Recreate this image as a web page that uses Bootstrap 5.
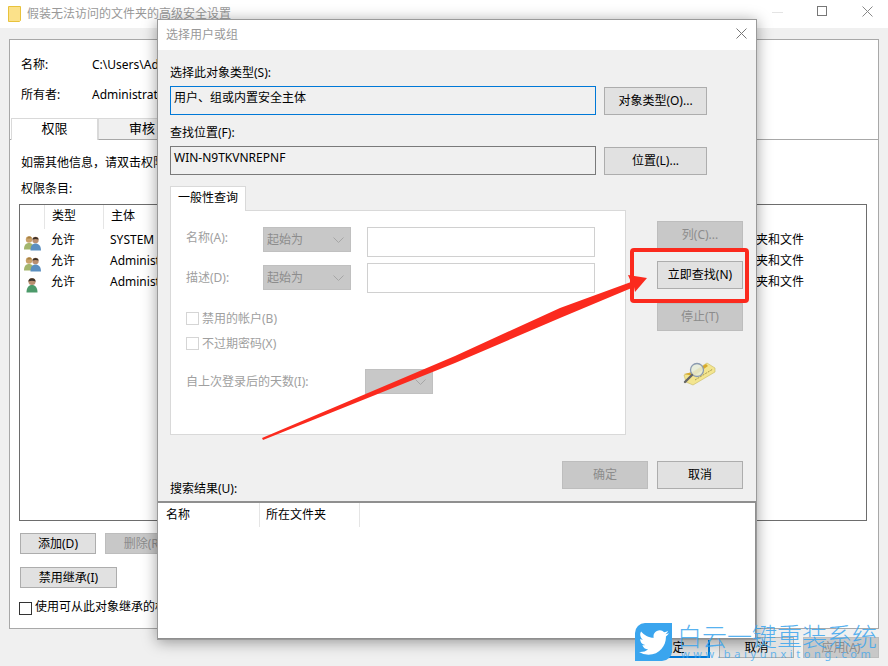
<!DOCTYPE html>
<html lang="zh-CN">
<head>
    <meta charset="UTF-8">
    <meta name="viewport" content="width=device-width, initial-scale=1">
    <title>选择用户或组</title>
    <link href="https://cdn.jsdelivr.net/npm/bootstrap@5.3.0/dist/css/bootstrap.min.css" rel="stylesheet">
    <style>
        html, body { height: 100%; }
        body { width: 888px; height: 666px; overflow: hidden; position: relative; background: #f0f0f0; color: #000;
            font: 12px/16px "Noto Sans", "Noto Sans CJK SC", sans-serif; }

        /* back window */
        .title-bar { height: 28px; background: #fff; color: #999; padding-left: 8px; }
        .folder-ico { margin-right: 6px; }
        .win-ctl { position: absolute; top: 6px; }
        .sec-panel { height: 590px; margin: 11px 9px 0; background: #fff; border: 1px solid #a8a8a8; padding: 0 11px 0 9px; }
        .sec-info { padding: 17px 0 0 2px; height: 78px; }
        .sec-info .info-row { height: 30px; display: flex; }
        .sec-info .info-key { width: 71px; }
        .tab-strip { height: 22px; margin: 0 -11px 0 -9px; border-bottom: 1px solid #a8a8a8; }
        .tab-item { height: 22px; text-align: center; line-height: 19px; font-size: 13px; background: #f0f0f0; border: 1px solid #d9d9d9; border-bottom: 0; }
        .tab-first { width: 87px; background: #fff; margin-left: 1px; }
        .tab-second { width: 88px; border-bottom: 1px solid #a8a8a8; }
        .sec-text { padding: 15px 0 0 2px; height: 64px; }
        .sec-text p { margin: 0 0 10px; white-space: nowrap; }
        .acl-box { height: 317px; border: 1px solid #6d6d6d; }
        .acl-head { height: 24px; }
        .acl-cell { padding-left: 7px; line-height: 22px; white-space: nowrap; }
        .acl-head .acl-cell { border-left: 1px solid #e5e5e5; }
        .acl-row { height: 21px; line-height: 21px; }
        .acl-row .acl-cell { line-height: 21px; }
        .c-ico { width: 24px; padding: 2px 0 0 4px; }
        .c-type { width: 59px; }
        .c-who { width: 120px; }
        .c-access { width: 300px; }
        .c-from { width: 130px; }
        .win-btn { --bs-btn-padding-y: 0; --bs-btn-padding-x: 0; --bs-btn-font-size: 12px; --bs-btn-line-height: 16px; --bs-btn-border-radius: 0;
            --bs-btn-color: #000; --bs-btn-bg: #e1e1e1; --bs-btn-border-color: #adadad;
            --bs-btn-disabled-color: #8c8c8c; --bs-btn-disabled-bg: #c8c8c8; --bs-btn-disabled-border-color: #bdbdbd; --bs-btn-disabled-opacity: 1;
            height: 28px; font-family: inherit; }
        .sec-actions { margin: 12px 0 0 1px; gap: 9px; }
        .sec-actions .win-btn, .sec-second .win-btn { height: 21px; }
        .sec-second { margin: 13px 0 0 1px; }
        .w-76 { width: 76px; }
        .w-97 { width: 97px; }
        .win-check { width: 13px; height: 13px; flex: none; border: 1px solid #333; background: #fff; margin: 0; border-radius: 0; }
        .win-check.is-off { border-color: #d5d5d5; }
        .sec-inherit { margin: 14px 0 0 0; gap: 3px; }
        .sec-inherit span { margin-top: -3px; white-space: nowrap; }
        .sec-foot { gap: 9px; margin: 8px 9px 0 0; }
        .sec-foot .win-btn { height: 21px; width: 75px; }
        .sec-foot .foot-apply { width: 76px; }
        .foot-ok { --bs-btn-border-color: #0078d7; border-width: 2px; }

        /* dialog */
        .pick-dialog { position: absolute; left: 157px; top: 19px; width: 600px; height: 621px; background: #f0f0f0;
            border: 1px solid #9a9a9a; box-shadow: 0 2px 14px rgba(0,0,0,.38); }
        .dlg-title { height: 30px; background: #fff; color: #999; padding-left: 8px; }
        .dlg-close { position: absolute; right: 9px; top: 8px; }
        .dlg-body { padding: 14px 13px 0 12px; }
        .dlg-label { height: 16px; margin-bottom: 6px; line-height: 18px; }
        .pick-row { gap: 8px; height: 38px; }
        .pick-field { width: 426px; height: 29px; padding: 3px 3px; border: 1px solid #7a7a7a; background: #f0f0f0; }
        .pick-field.is-focus { border-color: #0078d7; }
        .pick-row .win-btn { width: 103px; margin-top: 1px; }
        .query-area { margin-top: 2px; gap: 31px; height: 275px; }
        .query-left { width: 456px; }
        .query-tab { width: 76px; height: 25px; background: #fff; border: 1px solid #d9d9d9; border-bottom: 0; text-align: center; line-height: 22px; position: relative; z-index: 1; margin-bottom: -1px; }
        .query-panel { height: 225px; background: #fff; border: 1px solid #d9d9d9; padding: 16px 0 0 15px; color: #a0a0a0; }
        .query-row { height: 36px; }
        .query-row .q-label { width: 77px; padding-top: 3px; }
        .query-row-low .q-label { padding-top: 7px; }
        .query-row-low .win-select { margin-top: 2px; }
        .win-select { width: 88px; height: 25px; padding: 0 0 0 3px; border: 1px solid #c0c0c0; border-radius: 0; background-color: #c8c8c8; color: #8c8c8c; font-size: 12px; line-height: 23px;
            background-image: url("data:image/svg+xml,%3csvg xmlns='http://www.w3.org/2000/svg' viewBox='0 0 11 6'%3e%3cpath fill='none' stroke='%23a6a6a6' d='M.5 .5l5 5 5-5'/%3e%3c/svg%3e");
            background-position: right 6px center; background-size: 11px 6px; opacity: 1; font-family: inherit; }
        .win-select:disabled { background-color: #c8c8c8; }
        .win-input { width: 228px; height: 30px; margin-left: 16px; border: 1px solid #d0d0d0; border-radius: 0; background: #fff; padding: 0; }
        .win-input:disabled { background: #fff; }
        .query-checks { margin-top: 13px; }
        .query-check { height: 25px; gap: 3px; }
        .query-check span { margin-top: -1px; }
        .query-days { margin-top: 7px; height: 25px; }
        .query-days span { width: 179px; flex: none; }
        .query-days .win-select { width: 68px; }
        .query-side { width: 86px; padding-top: 35px; gap: 12px; }
        .query-side .win-btn { height: 28px; }
        .query-side .gap-fix { margin-top: 2px; }
        .find-ico { margin: 19px 0 0 26px; }
        .dlg-actions { height: 36px; }
        .dlg-actions .win-btn { width: 86px; }
        .dlg-btns { gap: 9px; }
        .result-list { height: 138px; background: #fff; border: 1px solid #8f8f8f; border-top-width: 2px; border-left-width: 0; margin-top: 4px; }
        .result-head { height: 24px; line-height: 23px; }
        .result-head > div { width: 100px; padding-left: 6px; border-right: 1px solid #e5e5e5; }
        .result-head > .res-first { width: 102px; padding-left: 8px; }

        /* annotations */
        .mark-layer { position: absolute; left: 0; top: 0; pointer-events: none; }
        .logo-box { position: absolute; left: 635px; top: 623px; width: 37px; height: 38px; background: #3aa5ee; border-radius: 10px 0 10px 0; }
        .logo-name { position: absolute; left: 677px; top: 617px; width: 204px; font-size: 25px; line-height: 36px; font-weight: 300; color: #3aa5ee; opacity: .85; white-space: nowrap; font-family: "Noto Sans CJK SC", sans-serif; }
        .logo-url { position: absolute; left: 681px; top: 646px; font-size: 11px; line-height: 16px; letter-spacing: 3.6px; color: #3aa5ee; opacity: .75; white-space: nowrap; }
    </style>
</head>
<body>
    <svg width="0" height="0" class="position-absolute">
        <defs>
            <g id="people-pair">
                <circle cx="5" cy="4.500" r="3.200" fill="#c9a26a"/>
                <path d="M3 3.500c.5-2.500 4-2.500 4.500-.5-1.500.5-3 .8-4.500.5z" fill="#a8803f"/>
                <path d="M0 14.500c0-4.500 2-6.500 5-6.500s5 2 5 6.500z" fill="#a3b56d"/>
                <circle cx="11.500" cy="5" r="3.200" fill="#b98f70"/>
                <path d="M8.500 4.500c0-3.500 6-3.500 6 0-2-.8-4-.8-6 0z" fill="#3e3127"/>
                <path d="M6.500 15.500c0-5 2-7 5-7s5.500 2 5.500 7z" fill="#5b8fc0"/>
            </g>
            <g id="person-single">
                <circle cx="6" cy="4.500" r="3.600" fill="#b98f70"/>
                <path d="M2.400 4.500c0-4.500 7.200-4.500 7.200 0-2.400-1-4.800-1-7.200 0z" fill="#3c332a"/>
                <path d="M.5 15.500c0-5 2.200-7.500 5.500-7.500s5.500 2.500 5.500 7.500z" fill="#4c9a6a"/>
            </g>
        </defs>
    </svg>

    <div class="title-bar d-flex align-items-center">
        <svg class="folder-ico" width="13" height="16" viewBox="0 0 13 16"><path d="M0.500 0.500h12v14l-1 1h-11z" fill="#fbe18a" stroke="#e8c23c"/></svg>
        <span>假装无法访问的文件夹的高级安全设置</span>
    </div>
    <svg class="win-ctl" style="left:772px" width="11" height="11"><path d="M0 6.500h11" stroke="#e4e4e4"/></svg>
    <svg class="win-ctl" style="left:817px" width="11" height="11"><rect x=".5" y=".5" width="9" height="9" fill="none" stroke="#777"/></svg>
    <svg class="win-ctl" style="left:862px" width="11" height="11"><path d="M.5 .5l10 10M10.500 .5l-10 10" stroke="#888" fill="none"/></svg>

    <div class="sec-panel">
        <div class="sec-info">
            <div class="info-row"><div class="info-key">名称:</div><div>C:\Users\Administrator\Desktop</div></div>
            <div class="info-row"><div class="info-key">所有者:</div><div>Administrators</div></div>
        </div>
        <div class="tab-strip d-flex">
            <div class="tab-item tab-first">权限</div>
            <div class="tab-item tab-second">审核</div>
        </div>
        <div class="sec-text">
            <p>如需其他信息，请双击权限条目。</p>
            <p>权限条目:</p>
        </div>
        <div class="acl-box">
            <div class="acl-head d-flex">
                <div class="c-ico"></div>
                <div class="acl-cell c-type">类型</div>
                <div class="acl-cell c-who">主体</div>
                <div class="acl-cell c-access">访问</div>
                <div class="acl-cell c-from">继承于</div>
                <div class="acl-cell flex-grow-1">应用于</div>
            </div>
            <div class="acl-row d-flex">
                <div class="c-ico"><svg width="17" height="16"><use href="#people-pair"/></svg></div>
                <div class="acl-cell c-type">允许</div><div class="acl-cell c-who">SYSTEM</div><div class="acl-cell c-access">完全控制</div><div class="acl-cell c-from">C:\Users\</div><div class="acl-cell flex-grow-1">此文件夹、子文件夹和文件</div>
            </div>
            <div class="acl-row d-flex">
                <div class="c-ico"><svg width="17" height="16"><use href="#people-pair"/></svg></div>
                <div class="acl-cell c-type">允许</div><div class="acl-cell c-who">Administrators</div><div class="acl-cell c-access">完全控制</div><div class="acl-cell c-from">C:\Users\</div><div class="acl-cell flex-grow-1">此文件夹、子文件夹和文件</div>
            </div>
            <div class="acl-row d-flex">
                <div class="c-ico"><svg width="17" height="16"><use href="#person-single" x="2"/></svg></div>
                <div class="acl-cell c-type">允许</div><div class="acl-cell c-who">Administrator</div><div class="acl-cell c-access">完全控制</div><div class="acl-cell c-from">C:\Users\</div><div class="acl-cell flex-grow-1">此文件夹、子文件夹和文件</div>
            </div>
        </div>
        <div class="sec-actions d-flex">
            <button class="btn win-btn w-76">添加(D)</button>
            <button class="btn win-btn w-76" disabled>删除(R)</button>
        </div>
        <div class="sec-second"><button class="btn win-btn w-97">禁用继承(I)</button></div>
        <div class="sec-inherit d-flex">
            <div class="win-check"></div><span>使用可从此对象继承的权限项目替换所有子对象</span>
        </div>
    </div>
    <div class="sec-foot d-flex justify-content-end">
        <button class="btn win-btn foot-ok">确定</button>
        <button class="btn win-btn">取消</button>
        <button class="btn win-btn foot-apply" disabled>应用(A)</button>
    </div>

    <div class="pick-dialog">
        <div class="dlg-title d-flex align-items-center">选择用户或组</div>
        <svg class="dlg-close" width="11" height="11"><path d="M.5 .5l10 10M10.500 .5l-10 10" stroke="#777" fill="none"/></svg>
        <div class="dlg-body">
            <div class="dlg-label">选择此对象类型(S):</div>
            <div class="pick-row d-flex">
                <div class="pick-field is-focus">用户、组或内置安全主体</div>
                <button class="btn win-btn">对象类型(O)...</button>
            </div>
            <div class="dlg-label">查找位置(F):</div>
            <div class="pick-row d-flex">
                <div class="pick-field">WIN-N9TKVNREPNF</div>
                <button class="btn win-btn">位置(L)...</button>
            </div>
            <div class="query-area d-flex">
                <div class="query-left">
                    <div class="query-tab">一般性查询</div>
                    <div class="query-panel">
                        <div class="query-row d-flex">
                            <div class="q-label">名称(A):</div>
                            <select class="form-select win-select" disabled><option>起始为</option></select>
                            <input class="form-control win-input" disabled>
                        </div>
                        <div class="query-row query-row-low d-flex">
                            <div class="q-label">描述(D):</div>
                            <select class="form-select win-select" disabled><option>起始为</option></select>
                            <input class="form-control win-input" disabled>
                        </div>
                        <div class="query-checks">
                            <div class="query-check d-flex"><div class="win-check is-off"></div><span>禁用的帐户(B)</span></div>
                            <div class="query-check d-flex"><div class="win-check is-off"></div><span>不过期密码(X)</span></div>
                        </div>
                        <div class="query-days d-flex align-items-center">
                            <span>自上次登录后的天数(I):</span>
                            <select class="form-select win-select" disabled><option></option></select>
                        </div>
                    </div>
                </div>
                <div class="query-side d-flex flex-column">
                    <button class="btn win-btn" disabled>列(C)...</button>
                    <button class="btn win-btn">立即查找(N)</button>
                    <button class="btn win-btn gap-fix" disabled>停止(T)</button>
                    <svg class="find-ico" width="33" height="25" viewBox="0 0 33 25">
                        <path d="M1 13l9-3 14-9 8 5v4L10 23 3 20z" fill="#f3e58f" stroke="#c8b860" stroke-width=".6"/>
                        <path d="M1 12l9-2 13-8 2 2-14 10z" fill="#d8a92c"/>
                        <path d="M12 18l18-11" stroke="#a89a50" stroke-width="1" stroke-dasharray="2 1"/>
                        <circle cx="14" cy="8" r="6.500" fill="#e6ecd8" fill-opacity=".85" stroke="#8a9ab0" stroke-width="1.300"/>
                        <path d="M9 13l-7 7" stroke="#666" stroke-width="2.400" stroke-linecap="round"/>
                    </svg>
                </div>
            </div>
            <div class="dlg-actions d-flex justify-content-between">
                <div class="align-self-end">搜索结果(U):</div>
                <div class="dlg-btns d-flex align-self-start">
                    <button class="btn win-btn" disabled>确定</button>
                    <button class="btn win-btn">取消</button>
                </div>
            </div>
        </div>
        <div class="result-list">
            <div class="result-head d-flex">
                <div class="res-first">名称</div>
                <div>所在文件夹</div>
            </div>
        </div>
    </div>

    <svg class="mark-layer" width="888" height="666">
        <rect x="632" y="250" width="115" height="51" rx="2" fill="none" stroke="#fb2a1e" stroke-width="4"/>
        <path d="M262 438L455 356 560 308 631 282 628 275 647 278 635 292 634 287 560 318 455 363 263 440z" fill="#fb2a1e"/>
    </svg>

    <div class="logo-box d-flex align-items-center justify-content-center">
        <svg width="30" height="25" viewBox="0 0 24 20"><path transform="translate(0 -2)" d="M23.953 4.570a10 10 0 01-2.825.775 4.958 4.958 0 002.163-2.723c-.951.555-2.005.959-3.127 1.184a4.920 4.920 0 00-8.384 4.482C7.690 8.095 4.067 6.130 1.640 3.162a4.822 4.822 0 00-.666 2.475c0 1.710.870 3.213 2.188 4.096a4.904 4.904 0 01-2.228-.616v.060a4.923 4.923 0 003.946 4.827 4.996 4.996 0 01-2.212.085 4.936 4.936 0 004.604 3.417 9.867 9.867 0 01-6.102 2.105c-.390 0-.779-.023-1.170-.067a13.995 13.995 0 007.557 2.209c9.053 0 13.998-7.496 13.998-13.985 0-.210 0-.420-.015-.630A9.935 9.935 0 0024 4.590z" fill="#fff"/></svg>
    </div>
    <div class="logo-name">白云一键重装系统</div>
    <div class="logo-url">www.baiyunxitong.com</div>

    <script src="https://cdn.jsdelivr.net/npm/bootstrap@5.3.0/dist/js/bootstrap.bundle.min.js"></script>
</body>
</html>
